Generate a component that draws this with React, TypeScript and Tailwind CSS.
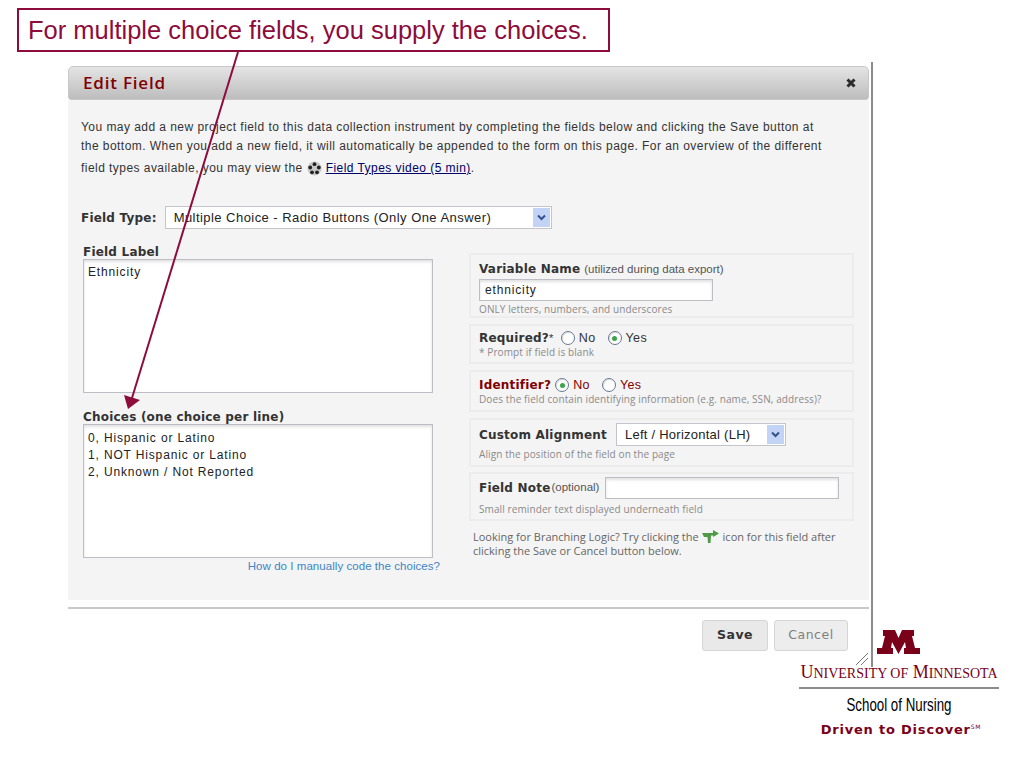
const sans = "font-['Liberation_Sans',Arial,sans-serif]";

function Radio({ on }: { on?: boolean }) {
    return (
        <span className="inline-flex w-[14px] h-[14px] rounded-full border border-[#66788f] bg-white items-center justify-center shadow-[inset_1px_1px_1px_rgba(0,0,0,0.12)]">
            {on && <span className="w-[5px] h-[5px] rounded-full bg-[#3fa34d]" />}
        </span>
    );
}

function SelectBox({ value, width, text }: { value: string; width: string; text: string }) {
    return (
        <div className={`${width} bg-white border border-[#c4c4cc] flex items-center justify-between pr-[1px] py-[1px]`}>
            <span className={`pl-[8px] text-[13px] text-[#222] ${text}`}>{value}</span>
            <span className="w-[17px] h-full bg-[#c3d3f5] flex items-center justify-center">
                <svg width="9" height="7" viewBox="0 0 9 7">
                    <path d="M1 1.5 L4.5 5 L8 1.5" fill="none" stroke="#34518c" strokeWidth="2" />
                </svg>
            </span>
        </div>
    );
}

function Hint({ children }: { children: string }) {
    return <div className="font-['Open_Sans',sans-serif] text-[10px] tracking-[0.1px] leading-[12px] text-[#8a8a8a]">{children}</div>;
}

const label = "font-['DejaVu_Sans',sans-serif] font-bold text-[12px] leading-[14px] tracking-[0.2px] text-[#333]";
const field = "block bg-white border border-[#bdbdc6] shadow-[inset_0_2px_3px_rgba(0,0,0,0.12)] outline-none resize-none";
const box = "border-2 border-[#ececec] px-[8px]";
const note = "text-[11.5px] text-[#555]";

export default function App() {
    return (
        <div className={`relative w-[1024px] h-[768px] bg-white overflow-hidden pl-[68px] pt-[62px] ${sans}`}>
            <div className="w-[805px] h-[605px] border-r-2 border-[#8c8c8c] pt-[4px] pr-[2px]">
                {/* Title bar */}
                <div className="h-[34px] rounded-t-[5px] rounded-b-[3px] border border-[#c8c8c8] bg-gradient-to-b from-[#e4e4e4] to-[#bdbdbd] flex items-center justify-between pl-[14px] pr-[12px]">
                    <span className="font-['Open_Sans',sans-serif] font-semibold text-[17px] tracking-[0.8px] text-[#800000]">Edit Field</span>
                    <svg width="10" height="10" viewBox="0 0 10 10">
                        <path d="M1.5 1.5 L8.5 8.5 M8.5 1.5 L1.5 8.5" stroke="#2b2b2b" strokeWidth="3" />
                    </svg>
                </div>

                {/* Body */}
                <div className="h-[500px] bg-[#f4f4f5] pl-[13px] pt-[18px] text-[#333]">
                    <div className="text-[12px] leading-[19px] tracking-[0.45px] whitespace-nowrap">
                        <div>You may add a new project field to this data collection instrument by completing the fields below and clicking the Save button at</div>
                        <div>the bottom. When you add a new field, it will automatically be appended to the form on this page. For an overview of the different</div>
                        <div className="leading-[23px] mt-[1px] flex items-center">
                            field types available, you may view the
                            <svg className="mx-[4px]" width="15" height="15" viewBox="0 0 15 15">
                                <circle cx="7.5" cy="7.5" r="7" fill="#c9c9c9" />
                                <circle cx="7.5" cy="3.2" r="1.9" fill="#222" />
                                <circle cx="3.2" cy="6.5" r="1.9" fill="#222" />
                                <circle cx="11.8" cy="6.5" r="1.9" fill="#222" />
                                <circle cx="5" cy="11.3" r="1.9" fill="#222" />
                                <circle cx="10" cy="11.3" r="1.9" fill="#222" />
                            </svg>
                            <a className="underline text-[#000066]">Field Types video (5 min)</a>.
                        </div>
                    </div>

                    <div className="mt-[26px] flex items-center gap-[8px]">
                        <span className={label}>Field Type:</span>
                        <SelectBox value="Multiple Choice - Radio Buttons (Only One Answer)" width="w-[387px] h-[23px]" text="tracking-[0.45px]" />
                    </div>

                    <div className="mt-[16px] flex gap-[36px] pl-[2px]">
                        {/* Left column */}
                        <div className="w-[350px]">
                            <div className={label}>Field Label</div>
                            <textarea
                                readOnly
                                defaultValue="Ethnicity"
                                className={`${field} w-[350px] h-[134px] px-[4px] pt-[4px] text-[12px] leading-[17px] tracking-[0.85px] text-[#222] ${sans}`}
                            />
                            <div className={`${label} mt-[17px]`}>Choices (one choice per line)</div>
                            <textarea
                                readOnly
                                defaultValue={"0, Hispanic or Latino\n1, NOT Hispanic or Latino\n2, Unknown / Not Reported"}
                                className={`${field} w-[350px] h-[134px] px-[4px] pt-[5px] text-[12px] leading-[17px] tracking-[0.85px] text-[#222] ${sans}`}
                            />
                            <div className="text-right -mr-[7px] text-[11.5px] leading-[16px] tracking-[0.05px] text-[#3d85c6] whitespace-nowrap">How do I manually code the choices?</div>
                        </div>

                        {/* Right column */}
                        <div className="w-[385px] mt-[8px] flex flex-col">
                            <div className={`${box} h-[65px] pt-[6px]`}>
                                <div className="flex items-baseline gap-[4px]">
                                    <span className={label}>Variable Name</span>
                                    <span className={note}>(utilized during data export)</span>
                                </div>
                                <input
                                    readOnly
                                    defaultValue="ethnicity"
                                    className={`${field} w-[234px] h-[22px] mt-[1px] px-[5px] text-[12px] tracking-[0.85px] text-[#222]`}
                                />
                                <div className="mt-[2px]"><Hint>ONLY letters, numbers, and underscores</Hint></div>
                            </div>

                            <div className={`${box} h-[40px] mt-[6px] pt-[4px]`}>
                                <div className="flex items-center gap-[4px] text-[12.5px] leading-[16px] tracking-[0.4px] text-[#333]">
                                    <span className={label}>Required?</span><span className="-ml-[4px] mr-[3px] text-[11px]">*</span>
                                    <Radio /><span className="mr-[8px]">No</span>
                                    <Radio on /><span>Yes</span>
                                </div>
                                <Hint>* Prompt if field is blank</Hint>
                            </div>

                            <div className={`${box} h-[42px] mt-[6px] pt-[5px]`}>
                                <div className="flex items-center gap-[4px] text-[12.5px] leading-[16px] tracking-[0.4px] text-[#800000]">
                                    <span className={`${label} !text-[#800000]`}>Identifier?</span>
                                    <Radio on /><span className="mr-[8px]">No</span>
                                    <Radio /><span>Yes</span>
                                </div>
                                <Hint>Does the field contain identifying information (e.g. name, SSN, address)?</Hint>
                            </div>

                            <div className={`${box} h-[49px] mt-[6px] pt-[3px]`}>
                                <div className="flex items-center gap-[9px]">
                                    <span className={label}>Custom Alignment</span>
                                    <SelectBox value="Left / Horizontal (LH)" width="w-[170px] h-[23px]" text="tracking-[0.25px]" />
                                </div>
                                <div className="mt-[2px]"><Hint>Align the position of the field on the page</Hint></div>
                            </div>

                            <div className={`${box} h-[49px] mt-[5px] pt-[3px]`}>
                                <div className="flex items-center">
                                    <span className={label}>Field Note</span>
                                    <span className={`${note} ml-[1px]`}>(optional)</span>
                                    <input readOnly className={`${field} ml-[6px] w-[234px] h-[22px]`} />
                                </div>
                                <div className="mt-[4px]"><Hint>Small reminder text displayed underneath field</Hint></div>
                            </div>

                            <div className="mt-[9px] pl-[4px] font-['Open_Sans',sans-serif] text-[11px] leading-[14px] text-[#666] whitespace-nowrap">
                                <div className="flex items-center gap-[3px]">
                                    Looking for Branching Logic? Try clicking the
                                    <svg width="18" height="14" viewBox="0 0 18 14">
                                        <path d="M0 3 H11 V0 L17 3.5 L11 7 V5.5 H9 L8.5 13 H6 L5.5 7 H2 Z" fill="#4e9a45" />
                                    </svg>
                                    icon for this field after
                                </div>
                                <div>clicking the Save or Cancel button below.</div>
                            </div>
                        </div>
                    </div>
                </div>

                {/* Footer */}
                <div className="mt-[7px] border-t-2 border-[#c8c8c8] pt-[11px] pr-[21px] flex justify-end gap-[6px]">
                    <button className="w-[66px] h-[31px] rounded-[3px] border border-[#d5d5d5] bg-[#e9e9e9] font-['DejaVu_Sans',sans-serif] font-bold text-[12.5px] tracking-[0.5px] text-[#333]">Save</button>
                    <button className="w-[74px] h-[31px] rounded-[3px] border border-[#d5d5d5] bg-[#ededed] font-['DejaVu_Sans',sans-serif] text-[12.5px] tracking-[0.5px] text-[#808080]">Cancel</button>
                </div>
            </div>

            {/* Callout */}
            <div className="absolute left-[17px] top-[8px] w-[593px] h-[44px] border-2 border-[#8d0c3c] bg-white flex items-center pl-[9px] text-[25.5px] text-[#8d0c3c] whitespace-nowrap">
                For multiple choice fields, you supply the choices.
            </div>
            <svg className="absolute left-0 top-0 pointer-events-none" width="300" height="420" viewBox="0 0 300 420">
                <line x1="238" y1="52" x2="132" y2="398" stroke="#8d0c3c" strokeWidth="2" />
                <path d="M128 409 L124 395 L140 400 Z" fill="#8d0c3c" />
            </svg>

            {/* Resize grip */}
            <svg className="absolute left-[855px] top-[652px]" width="14" height="14" viewBox="0 0 14 14">
                <path d="M1 13 L13 1 M6 13 L13 6" stroke="#777" strokeWidth="1" />
            </svg>

            {/* Logo */}
            <div className="absolute left-[799px] top-[630px] w-[200px] flex flex-col items-center">
                <svg className="-ml-[1px]" width="45" height="25" viewBox="0 0 45 25">
                    <path d="M7 0 H19 L22.5 8 L26 0 H38 V6 H36 L39 18 H44 V24 H28 V18 H30 L29 12 L22.5 24 L16 12 L15 18 H17 V24 H1 V18 H6 L9 6 H7 Z" fill="#7a0019" />
                </svg>
                <div className="mt-[7px] font-['Liberation_Serif',serif] text-[18px] leading-[20px] text-[#7a0019] whitespace-nowrap">
                    U<span className="text-[14px]">NIVERSITY OF</span> M<span className="text-[14px]">INNESOTA</span>
                </div>
                <div className="w-[200px] h-[2px] bg-[#8c8c8c] mt-[3px]" />
                <div className="mt-[5px] font-['Liberation_Sans',sans-serif] text-[19px] leading-[22px] text-black whitespace-nowrap scale-x-[0.7]">School of Nursing</div>
                <div className="mt-[3px] ml-[4px] font-['DejaVu_Sans',sans-serif] font-bold text-[13px] leading-[16px] tracking-[0.8px] text-[#7a0019] whitespace-nowrap">
                    Driven to Discover<span className="text-[6px] align-super font-normal">SM</span>
                </div>
            </div>
        </div>
    );
}
